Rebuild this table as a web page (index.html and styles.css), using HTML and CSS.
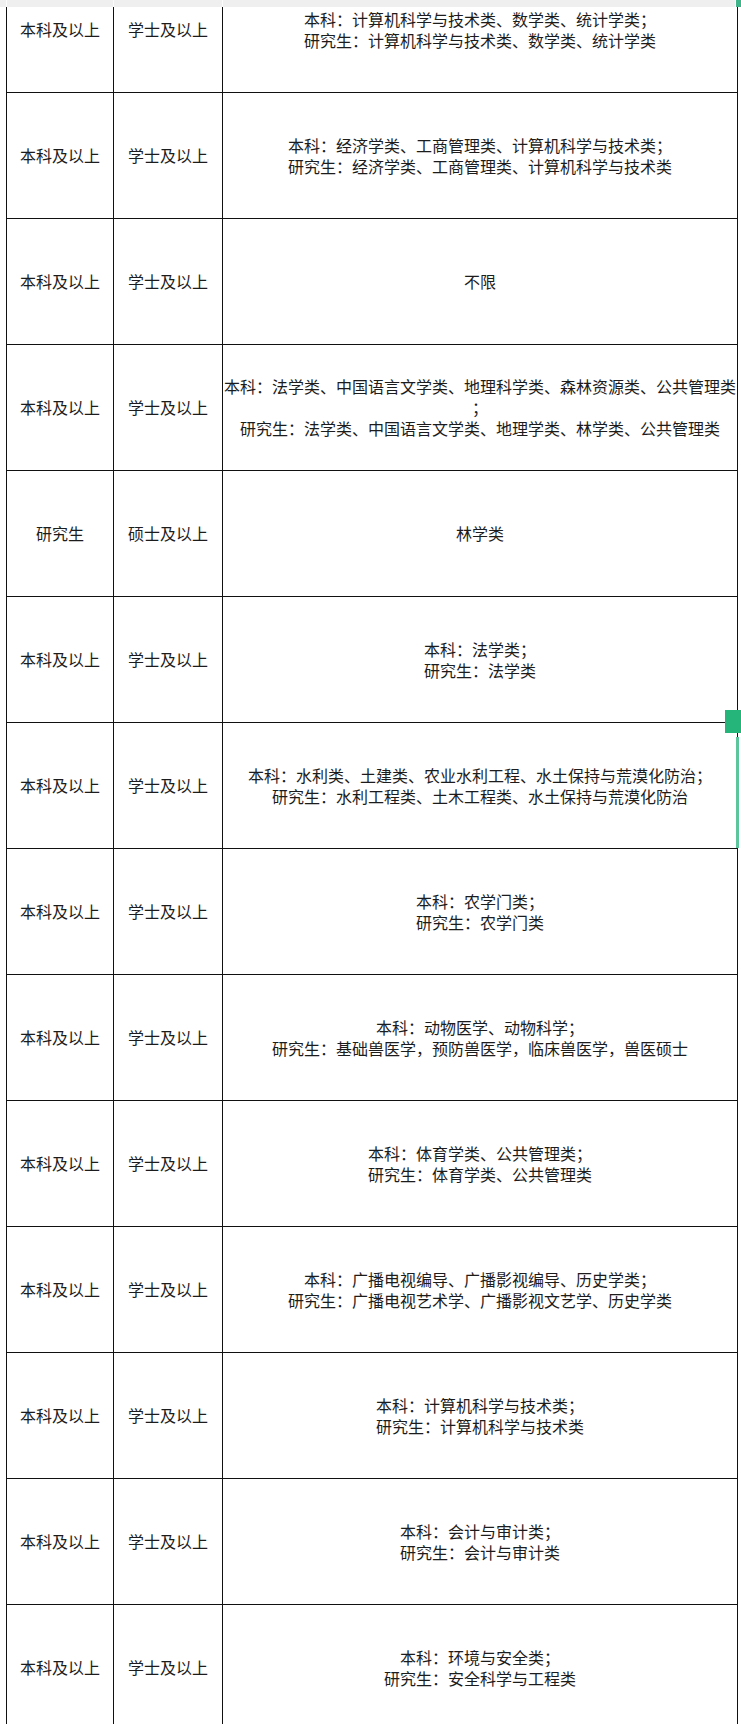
FILE: index.html
```html
<!DOCTYPE html>
<html lang="zh-CN">
<head>
<meta charset="utf-8">
<title>岗位表</title>
<link rel="stylesheet" href="styles.css">
</head>
<body>
<div class="sheet">
  <div class="row">
    <div class="cell c1">本科及以上</div>
    <div class="cell c2">学士及以上</div>
    <div class="cell c3"><span>本科：计算机科学与技术类、数学类、统计学类；</span><span>研究生：计算机科学与技术类、数学类、统计学类</span></div>
  </div>
  <div class="row">
    <div class="cell c1">本科及以上</div>
    <div class="cell c2">学士及以上</div>
    <div class="cell c3"><span>本科：经济学类、工商管理类、计算机科学与技术类；</span><span>研究生：经济学类、工商管理类、计算机科学与技术类</span></div>
  </div>
  <div class="row">
    <div class="cell c1">本科及以上</div>
    <div class="cell c2">学士及以上</div>
    <div class="cell c3"><span>不限</span></div>
  </div>
  <div class="row">
    <div class="cell c1">本科及以上</div>
    <div class="cell c2">学士及以上</div>
    <div class="cell c3"><span>本科：法学类、中国语言文学类、地理科学类、森林资源类、公共管理类</span><span>；</span><span>研究生：法学类、中国语言文学类、地理学类、林学类、公共管理类</span></div>
  </div>
  <div class="row">
    <div class="cell c1">研究生</div>
    <div class="cell c2">硕士及以上</div>
    <div class="cell c3"><span>林学类</span></div>
  </div>
  <div class="row">
    <div class="cell c1">本科及以上</div>
    <div class="cell c2">学士及以上</div>
    <div class="cell c3"><span>本科：法学类；</span><span>研究生：法学类</span></div>
  </div>
  <div class="row">
    <div class="cell c1">本科及以上</div>
    <div class="cell c2">学士及以上</div>
    <div class="cell c3"><span>本科：水利类、土建类、农业水利工程、水土保持与荒漠化防治；</span><span>研究生：水利工程类、土木工程类、水土保持与荒漠化防治</span></div>
  </div>
  <div class="row">
    <div class="cell c1">本科及以上</div>
    <div class="cell c2">学士及以上</div>
    <div class="cell c3"><span>本科：农学门类；</span><span>研究生：农学门类</span></div>
  </div>
  <div class="row">
    <div class="cell c1">本科及以上</div>
    <div class="cell c2">学士及以上</div>
    <div class="cell c3"><span>本科：动物医学、动物科学；</span><span>研究生：基础兽医学，预防兽医学，临床兽医学，兽医硕士</span></div>
  </div>
  <div class="row">
    <div class="cell c1">本科及以上</div>
    <div class="cell c2">学士及以上</div>
    <div class="cell c3"><span>本科：体育学类、公共管理类；</span><span>研究生：体育学类、公共管理类</span></div>
  </div>
  <div class="row">
    <div class="cell c1">本科及以上</div>
    <div class="cell c2">学士及以上</div>
    <div class="cell c3"><span>本科：广播电视编导、广播影视编导、历史学类；</span><span>研究生：广播电视艺术学、广播影视文艺学、历史学类</span></div>
  </div>
  <div class="row">
    <div class="cell c1">本科及以上</div>
    <div class="cell c2">学士及以上</div>
    <div class="cell c3"><span>本科：计算机科学与技术类；</span><span>研究生：计算机科学与技术类</span></div>
  </div>
  <div class="row">
    <div class="cell c1">本科及以上</div>
    <div class="cell c2">学士及以上</div>
    <div class="cell c3"><span>本科：会计与审计类；</span><span>研究生：会计与审计类</span></div>
  </div>
  <div class="row">
    <div class="cell c1">本科及以上</div>
    <div class="cell c2">学士及以上</div>
    <div class="cell c3"><span>本科：环境与安全类；</span><span>研究生：安全科学与工程类</span></div>
  </div>
</div>

<div class="colhead">
  <div class="h h0"></div>
  <div class="h h1"></div>
  <div class="h h2"></div>
  <div class="h h3"></div>
  <div class="h hsel"></div>
</div>

<div class="sel-handle"></div>
<div class="sel-edge"></div>
</body>
</html>
```

FILE: styles.css
```css
html, body {
  margin: 0;
  padding: 0;
  background: #ffffff;
}

body {
  width: 741px;
  height: 1724px;
  overflow: hidden;
  position: relative;
  font-family: "Noto Sans CJK SC", "Noto Sans", sans-serif;
  font-size: 16px;
  color: #1c1c1c;
}

.sheet {
  margin-top: -33px;
  margin-left: 6px;
  width: 731px;
  border-left: 1px solid #111;
}

.row {
  display: flex;
}

.cell {
  height: 125px;
  border-right: 1px solid #111;
  border-bottom: 1px solid #111;
  box-sizing: content-box;
  display: flex;
  flex-direction: column;
  align-items: center;
  justify-content: center;
  text-align: center;
  line-height: 21px;
  white-space: nowrap;
}

.c1 { width: 106px; }
.c2 { width: 108px; }
.c3 { width: 514px; }

.c3 span {
  display: block;
}

/* spreadsheet column header strip */
.colhead {
  position: absolute;
  left: 0;
  top: 0;
  width: 741px;
  height: 7px;
  display: flex;
  background: #efefef;
}

.h {
  height: 7px;
  border-right: 1px solid #fbfbfb;
  box-sizing: border-box;
}

.h0 { width: 7px; }
.h1 { width: 107px; }
.h2 { width: 109px; }
.h3 { width: 513px; }
.hsel {
  flex: 1;
  background: #3fb389;
  border-right: none;
}

/* selected cell indicator */
.sel-handle {
  position: absolute;
  left: 725px;
  top: 710px;
  width: 16px;
  height: 23px;
  background: #25b57b;
}

.sel-edge {
  position: absolute;
  left: 736px;
  top: 737px;
  width: 3px;
  height: 111px;
  background: #5cc59b;
}
```
